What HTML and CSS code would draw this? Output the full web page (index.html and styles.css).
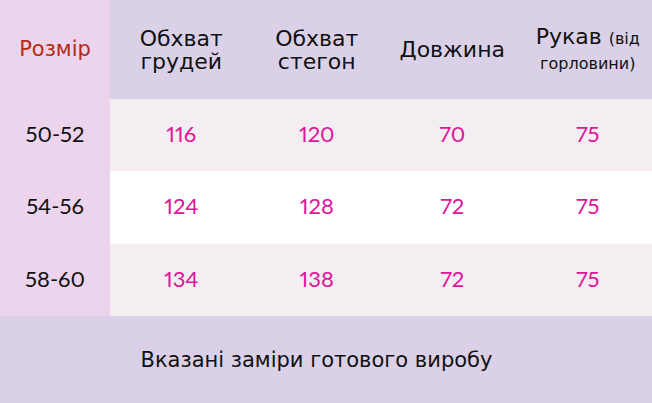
FILE: index.html
```html
<!DOCTYPE html>
<html lang="uk">
<head>
<meta charset="utf-8">
<title>Розмірна сітка</title>
<link rel="stylesheet" href="styles.css">
</head>
<body>
<div class="chart">
  <div class="row head">
    <div class="cell size size-title">Розмір</div>
    <div class="cell"><div class="label">Обхват<br>грудей</div></div>
    <div class="cell"><div class="label">Обхват<br>стегон</div></div>
    <div class="cell"><div class="label">Довжина</div></div>
    <div class="cell"><div class="label">Рукав <span class="small">(від</span><br><span class="small">горловини)</span></div></div>
  </div>
  <div class="row odd">
    <div class="cell size">50-52</div>
    <div class="cell num">116</div>
    <div class="cell num">120</div>
    <div class="cell num">70</div>
    <div class="cell num">75</div>
  </div>
  <div class="row even">
    <div class="cell size">54-56</div>
    <div class="cell num">124</div>
    <div class="cell num">128</div>
    <div class="cell num">72</div>
    <div class="cell num">75</div>
  </div>
  <div class="row odd">
    <div class="cell size">58-60</div>
    <div class="cell num">134</div>
    <div class="cell num">138</div>
    <div class="cell num">72</div>
    <div class="cell num">75</div>
  </div>
  <div class="note">Вказані заміри готового виробу</div>
</div>
</body>
</html>
```
FILE: styles.css
```css
html, body {
  margin: 0;
  padding: 0;
}
body {
  width: 652px;
  height: 403px;
  overflow: hidden;
  font-family: "DejaVu Sans", "Noto Sans", sans-serif;
  color: #111;
}
.chart {
  display: flex;
  flex-direction: column;
  width: 652px;
}
.row {
  display: grid;
  grid-template-columns: 110px repeat(4, 1fr);
  height: 72px;
}
.row.head {
  height: 99px;
  background: #dad1e8;
  font-size: 22px;
  line-height: 23px;
}
.row.odd { background: #f4edf2; }
.row.even { background: #ffffff; height: 73px; }
.cell {
  display: flex;
  align-items: center;
  justify-content: center;
  text-align: center;
  padding-left: 7px;
}
.odd .cell, .even .cell {
  padding-bottom: 4px;
}
.label {
  white-space: nowrap;
}
.cell.size {
  background: #ecd4ed;
  padding-left: 0;
  font-family: "Lato", sans-serif;
  font-variant-numeric: proportional-nums;
  font-size: 22px;
}
.cell.size-title {
  color: #b42a12;
  font-family: "DejaVu Sans", sans-serif;
  font-size: 21px;
}
.num {
  color: #e1139a;
  font-family: "Lato", sans-serif;
  font-variant-numeric: proportional-nums;
  font-size: 22px;
}
.small {
  font-size: 16px;
}
.note {
  height: 87px;
  background: #dad1e8;
  display: flex;
  align-items: center;
  justify-content: center;
  padding-right: 19px;
  font-size: 21px;
}
```
